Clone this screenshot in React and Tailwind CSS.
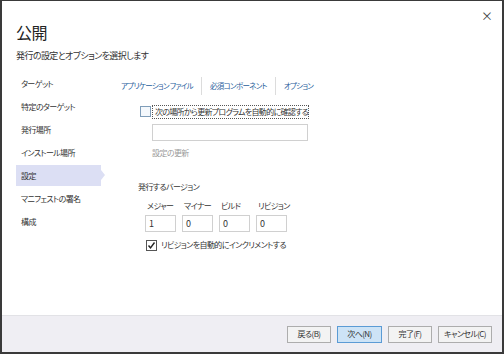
const font = { fontFamily: '"Noto Sans CJK JP", "Noto Sans", sans-serif' };

const menu = ['ターゲット', '特定のターゲット', '発行場所', 'インストール場所', '設定', 'マニフェストの署名', '構成'];
const tabs = ['アプリケーション ファイル', '必須コンポーネント', 'オプション'];
const versions = [
  { label: 'メジャー', value: '1' },
  { label: 'マイナー', value: '0' },
  { label: 'ビルド', value: '0' },
  { label: 'リビジョン', value: '0' },
];

function Button({ children, primary, w }) {
  return (
    <button
      type="button"
      className={`h-[17px] ${w} text-[8px] leading-none whitespace-nowrap tracking-[-0.6px] text-[#333] border ${primary ? 'bg-[#cde3f6] border-[#5b9bd5]' : 'bg-[#f3f3f3] border-[#adadad]'}`}
    >
      {children}
    </button>
  );
}

export default function App() {
  return (
    <div
      style={font}
      className="w-[504px] h-[354px] bg-white border-t border-x-2 border-b-2 border-[#3a3a3a] flex flex-col text-[#333] overflow-hidden [font-feature-settings:'palt']"
    >
      {/* Header */}
      <div className="relative px-[14px] pt-[20px] h-[70px]">
        <span className="absolute right-[9px] top-[6px] text-[12px] text-[#444]">×</span>
        <h1 className="text-[16px] leading-[22px] font-normal text-[#222] tracking-[-0.5px]">公開</h1>
        <p className="mt-[6px] text-[9px] leading-[14px] text-[#333] tracking-[-0.6px]">発行の設定とオプションを選択します</p>
      </div>

      {/* Body */}
      <div className="flex flex-1">
        <ul className="w-[102px] pl-[14px] pt-[1px] flex flex-col">
          {menu.map((m) => (
            <li key={m} className="h-[23px] relative flex items-center">
              {m === '設定' ? (
                <>
                  <div className="absolute left-0 top-[1px] bottom-[1px] w-[85px] bg-[#dcdff4]" />
                  <div className="absolute left-[85px] top-[6px] w-0 h-0 border-y-[5px] border-y-transparent border-l-[4px] border-l-[#dcdff4]" />
                </>
              ) : null}
              <span className="relative pl-[5px] text-[8px] tracking-[-0.6px] text-[#333]">{m}</span>
            </li>
          ))}
        </ul>

        <div className="flex-1 pl-[17px]">
          {/* Tabs */}
          <div className="h-[30px] flex items-center">
            {tabs.map((t, i) => (
              <div key={t} className="flex items-center">
                {i > 0 && <div className="w-px h-[18px] bg-[#dcdcdc] ml-[8px] mr-[8px]" />}
                <span className="text-[7.5px] tracking-[-0.7px] text-[#1f5e9c] whitespace-nowrap">{t}</span>
              </div>
            ))}
          </div>

          <div className="pl-[19px]">
            <div className="flex items-center h-[15px] mt-[3px]">
              <div className="w-[11px] h-[11px] border border-[#7f9db9] bg-[#f4f8fc]" />
              <span className="ml-[1px] pl-[2px] w-[157px] whitespace-nowrap border border-dotted border-[#555] text-[8px] leading-[12px] tracking-[-0.7px] text-[#333]">
                次の場所から更新プログラムを自動的に確認する
              </span>
            </div>
            <div className="ml-[12px] mt-[5px] w-[156px] h-[17px] border border-[#d0d0d0] bg-white" />
            <p className="ml-[12px] mt-[6px] text-[8px] leading-[12px] tracking-[-0.6px] text-[#9a9a9a]">設定の更新</p>
          </div>

          <div className="pl-[17px] mt-[22px]">
            <p className="text-[8px] leading-[12px] tracking-[-0.6px] text-[#333]">発行するバージョン</p>
            <div className="flex gap-[6px] pl-[7px] mt-[7px]">
              {versions.map((v) => (
                <div key={v.label} className="flex flex-col w-[31px]">
                  <span className="pl-[2px] text-[8px] leading-[12px] tracking-[-0.6px] text-[#333] whitespace-nowrap">{v.label}</span>
                  <div className="mt-[3px] h-[17px] border border-[#d0d0d0] flex items-center pl-[3px] text-[9px] text-[#333]">
                    {v.value}
                  </div>
                </div>
              ))}
            </div>
            <div className="flex items-center pl-[8px] mt-[7px]">
              <div className="w-[11px] h-[11px] border border-[#555] bg-white flex items-center justify-center">
                <svg width="9" height="9" viewBox="0 0 9 9">
                  <path d="M1.5 4.5 L3.5 6.8 L7.5 1.5" fill="none" stroke="#222" strokeWidth="1.4" />
                </svg>
              </div>
              <span className="ml-[4px] text-[8px] tracking-[-0.6px] text-[#333]">リビジョンを自動的にインクリメントする</span>
            </div>
          </div>
        </div>
      </div>

      {/* Footer */}
      <div className="h-[37px] bg-[#efeef3] border-t border-[#e2e2e6] flex items-center justify-end gap-[6px] pr-[10px]">
        <Button w="w-[44px]">戻る(B)</Button>
        <Button w="w-[45px]" primary>次へ(N)</Button>
        <Button w="w-[44px]">完了(F)</Button>
        <Button w="w-[54px]">キャンセル(C)</Button>
      </div>
    </div>
  );
}
